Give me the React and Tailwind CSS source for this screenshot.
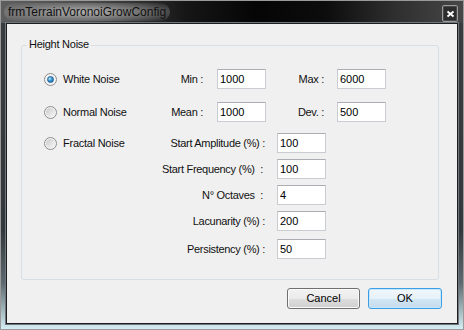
import React from "react";

const ui = { fontFamily: '"Liberation Sans", Arial, sans-serif' };

function Radio({ checked, label }) {
  return (
    <div className="flex items-center gap-[6px]">
      <span className="flex h-[13px] w-[13px] items-center justify-center rounded-full border border-[#8d8d8d] bg-[#f4f4f4]">
        {checked ? (
          <span className="h-[7px] w-[7px] rounded-full border border-[#1f5f92] bg-[radial-gradient(circle_at_35%_30%,#bfe6fb_0%,#3d9ad8_45%,#0f5e9e_100%)]" />
        ) : (
          <span className="h-[9px] w-[9px] rounded-full bg-[linear-gradient(135deg,#c9c9c9_0%,#e6e6e6_60%,#f6f6f6_100%)]" />
        )}
      </span>
      <span className="text-[11px] leading-[13px] tracking-[-0.25px] text-[#111]">{label}</span>
    </div>
  );
}

function Field({ value }) {
  return (
    <div className="flex h-[20px] w-[49px] items-center border border-[#c9cdd2] border-t-[#abadb3] bg-white pl-[2px] text-[11px] text-black">
      {value}
    </div>
  );
}

function Label({ w, children }) {
  return (
    <div
      className="whitespace-pre text-right text-[11px] leading-[13px] tracking-[-0.3px] text-[#111]"
      style={{ width: w }}
    >
      {children}
    </div>
  );
}

function Button({ children, primary }) {
  return (
    <div
      className={
        "flex h-[21px] items-center justify-center rounded-[3px] border text-[11px] text-black " +
        (primary
          ? "w-[74px] border-[#3c9ee4] bg-[linear-gradient(180deg,#f2f8fc_0%,#e6f1f9_50%,#d3e6f3_51%,#c4dcee_100%)] shadow-[inset_0_0_0_1px_#c6e6fa]"
          : "w-[73px] border-[#707070] bg-[linear-gradient(180deg,#f2f2f2_0%,#ebebeb_50%,#dddddd_51%,#cfcfcf_100%)] shadow-[inset_0_0_0_1px_#fbfbfb]")
      }
    >
      {children}
    </div>
  );
}

export default function App() {
  return (
    <div
      style={ui}
      className="flex h-[330px] w-[464px] flex-col border border-[#9a9a9a] bg-[linear-gradient(180deg,#3a3d40_0%,#33383c_70%,#5d6a70_86%,#d4eef3_100%)]"
    >
      {/* title bar */}
      <div className="flex h-[22px] items-start justify-between bg-[linear-gradient(90deg,#5e5e5e_0%,#4a4a4a_20%,#161616_40%,#050505_55%,#0c0c0c_70%,#2e2e2e_85%,#474747_100%)] pr-[5px]">
        <div className="ml-[3px] mt-[2px] rounded-[10px] bg-[radial-gradient(ellipse_at_center,rgba(210,210,210,0.75)_0%,rgba(170,170,170,0.45)_55%,rgba(120,120,120,0)_100%)] px-[4px] py-[1px] text-[12px] leading-[16px] text-[#111]">
          frmTerrainVoronoiGrowConfig
        </div>
        <div className="mt-[4px] flex h-[17px] w-[16px] items-center justify-center rounded-[2px] border border-[#9a9a9a] bg-[#2c2c2c] shadow-[inset_0_0_0_1px_#4a4a4a]">
          <svg width="9" height="8" viewBox="0 0 9 8">
            <path d="M1 1 L8 7 M8 1 L1 7" stroke="#333" strokeWidth="3" strokeLinecap="square" />
            <path d="M1.5 1.5 L7.5 6.5 M7.5 1.5 L1.5 6.5" stroke="#fff" strokeWidth="1.8" />
          </svg>
        </div>
      </div>

      {/* client area */}
      <div className="mx-[5px] mb-[5px] flex flex-1 flex-col border border-[#1e1e1e] bg-[#f0f0f0] shadow-[0_0_0_1px_#6f777c]">
        <div className="relative ml-[14px] mt-[21px] h-[235px] w-[418px] rounded-[3px] border border-[#d5dfe5]">
          <span className="absolute left-[5px] top-[-8px] bg-[#f0f0f0] px-[2px] text-[11px] leading-[13px] tracking-[-0.25px] text-[#111]">
            Height Noise
          </span>

          <div className="flex flex-col pt-[23px]">
            <div className="flex h-[20px] items-center">
              <div className="w-[138px] pl-[22px]">
                <Radio checked label="White Noise" />
              </div>
              <Label w="43px">Min :</Label>
              <div className="ml-[14px]">
                <Field value="1000" />
              </div>
              <Label w="58px">Max :</Label>
              <div className="ml-[13px]">
                <Field value="6000" />
              </div>
            </div>

            <div className="mt-[13px] flex h-[20px] items-center">
              <div className="w-[138px] pl-[22px]">
                <Radio label="Normal Noise" />
              </div>
              <Label w="43px">Mean :</Label>
              <div className="ml-[14px]">
                <Field value="1000" />
              </div>
              <Label w="58px">Dev. :</Label>
              <div className="ml-[13px]">
                <Field value="500" />
              </div>
            </div>

            <div className="mt-[11px] flex h-[20px] items-center">
              <div className="w-[138px] pl-[22px]">
                <Radio label="Fractal Noise" />
              </div>
              <Label w="105px">Start Amplitude (%) :</Label>
              <div className="ml-[12px]">
                <Field value="100" />
              </div>
            </div>

            <div className="mt-[6px] flex h-[20px] items-center">
              <Label w="241px">Start Frequency (%)  :</Label>
              <div className="ml-[14px]">
                <Field value="100" />
              </div>
            </div>

            <div className="mt-[6px] flex h-[20px] items-center">
              <Label w="241px">N° Octaves  :</Label>
              <div className="ml-[14px]">
                <Field value="4" />
              </div>
            </div>

            <div className="mt-[6px] flex h-[20px] items-center">
              <Label w="243px">Lacunarity (%) :</Label>
              <div className="ml-[12px]">
                <Field value="200" />
              </div>
            </div>

            <div className="mt-[8px] flex h-[20px] items-center">
              <Label w="243px">Persistency (%) :</Label>
              <div className="ml-[12px]">
                <Field value="50" />
              </div>
            </div>
          </div>
        </div>

        <div className="mr-[15px] mt-[8px] flex justify-end gap-[8px]">
          <Button>Cancel</Button>
          <Button primary>OK</Button>
        </div>
      </div>
    </div>
  );
}
